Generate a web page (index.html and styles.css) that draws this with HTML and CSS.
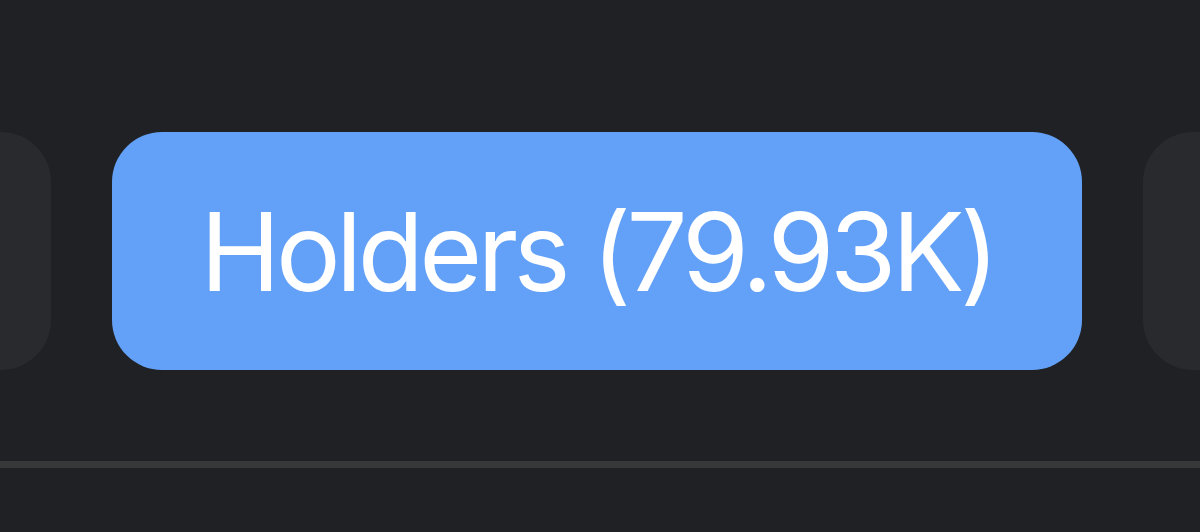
FILE: index.html
```html
<!DOCTYPE html>
<html lang="en">
<head>
    <meta charset="UTF-8">
    <title>Holders</title>
    <link rel="stylesheet" href="styles.css">
</head>
<body>
    <div class="tabs">
        <div class="tab tab-prev"></div>
        <div class="tab tab-active">Holders (79.93K)</div>
        <div class="tab tab-next"></div>
    </div>
    <div class="divider"></div>
</body>
</html>
```

FILE: styles.css
```css
body {
    margin: 0;
    padding: 0;
    background-color: #202124;
    font-family: Inter, "Open Sans", sans-serif;
    overflow: hidden;
    height: 532px;
}
.tabs {
    display: flex;
    gap: 61px;
    padding-top: 132px;
    margin-left: -249px;
    white-space: nowrap;
}
.tab {
    flex: none;
    height: 238px;
    border-radius: 50px;
    display: flex;
    align-items: center;
    justify-content: center;
}
.tab-prev,
.tab-next {
    width: 300px;
    background-color: #292a2d;
}
.tab-active {
    width: 970px;
    background-color: #63a1f8;
    color: #ffffff;
    font-size: 108px;
    letter-spacing: -4.6px;
    padding-left: 1px;
    box-sizing: border-box;
}
.divider {
    margin-top: 91px;
    height: 7px;
    background-color: #37383a;
}
```
